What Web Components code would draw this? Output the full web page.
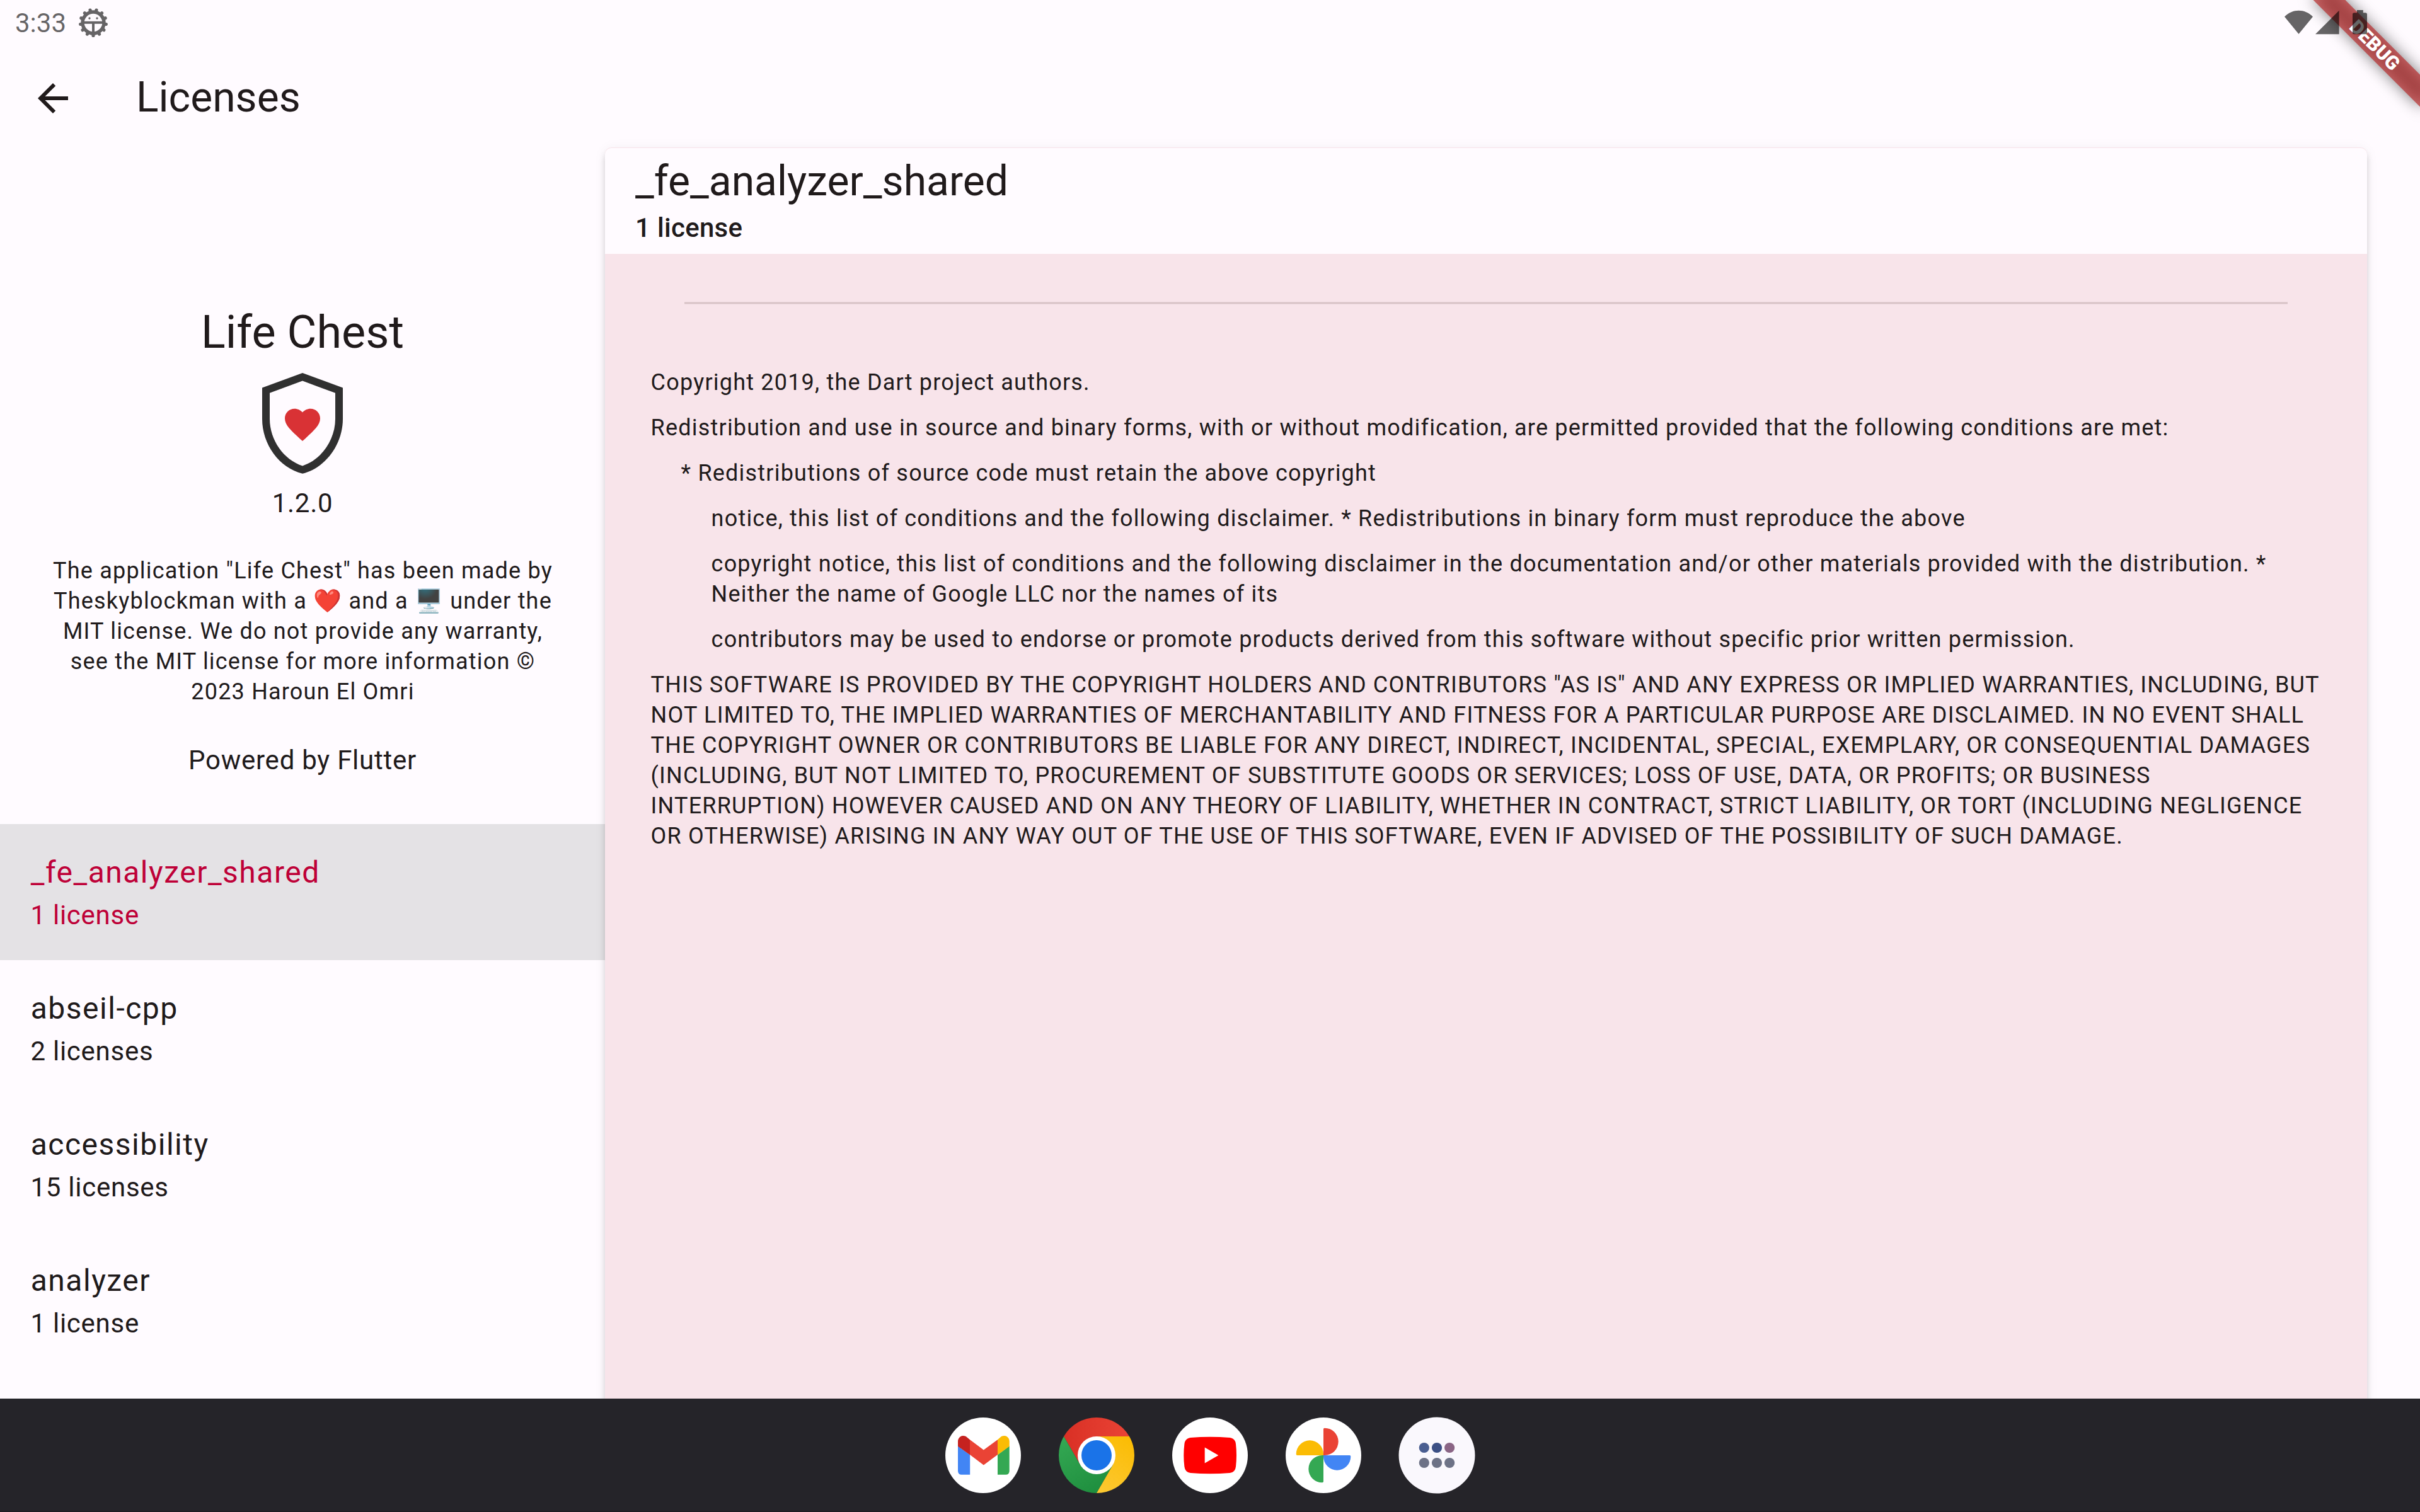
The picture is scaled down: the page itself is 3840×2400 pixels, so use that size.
<!DOCTYPE html>
<html lang="en">
<head>
<meta charset="utf-8">
<title>Licenses</title>
<style>
  html, body { margin: 0; height: 100%; }
  body { font-family: Roboto, "Noto Sans", sans-serif; color: #201a1b; background: #fffbff; overflow: hidden; }
</style>
</head>
<body>
<license-app></license-app>
<script>
const define = (name, html) => customElements.define(name, class extends HTMLElement {
  constructor() {
    super();
    const t = document.createElement('template');
    t.innerHTML = html;
    this.attachShadow({ mode: 'open' }).appendChild(t.content.cloneNode(true));
  }
});

const teeth = Array.from({ length: 13 }, (_, i) => {
  const a = (180 + i * 360 / 13) * Math.PI / 180;
  const p = r => (24 + r * Math.sin(a)).toFixed(2) + ' ' + (24 - r * Math.cos(a)).toFixed(2);
  return 'M' + p(17.5) + 'L' + p(20.5);
}).join('');

define('status-bar', `
<style>
  :host { display: flex; justify-content: space-between; height: 72px; position: relative; z-index: 5; color: rgba(0,0,0,.6); }
  .left { display: flex; padding-left: 24px; }
  .clock { font-size: 42px; line-height: 59px; padding-top: 7px; width: 100px; white-space: nowrap; }
  .left svg { margin-top: 12px; }
  .right { display: flex; }
  svg { display: block; }
</style>
<div class="left">
  <span class="clock">3:33</span>
  <svg width="48" height="48" viewBox="0 0 48 48" fill="none" stroke="#666466">
    <path d="${teeth}" stroke-width="5.2" stroke-linecap="round"/>
    <circle cx="24" cy="24" r="17" stroke-width="5.4"/>
    <path d="M8 23.8H40" stroke-width="4"/><path d="M24 24V39" stroke-width="4"/>
    <circle cx="18" cy="17" r="1.7" fill="#666466" stroke="none"/><circle cx="30" cy="17" r="1.7" fill="#666466" stroke="none"/>
  </svg>
</div>
<div class="right">
  <svg width="240" height="72" viewBox="3600 0 240 72" fill="#000" fill-opacity=".6">
    <path d="M3647.5 54L3625 26.4C3638 13.5 3657 13.5 3670 26.4Z"/>
    <path d="M3674 54.3H3711.6V16.8Z"/>
    <path d="M3740 16H3749.8V20.3H3753.5Q3756 20.3 3756 22.8V51.8Q3756 54.3 3753.5 54.3H3735.5Q3733 54.3 3733 51.8V22.8Q3733 20.3 3735.5 20.3H3740Z"/>
  </svg>
</div>`);

define('debug-banner', `
<style>
  :host { display: block; position: absolute; top: 0; right: 0; width: 260px; height: 260px; overflow: hidden; z-index: 4; }
  .strip { position: absolute; left: 67.9px; top: 54.1px; width: 240px; height: 36px; transform: rotate(45deg); }
  .shade, .band { position: absolute; inset: 0; }
  .shade { background: rgba(0,0,0,.5); filter: blur(12px); }
  .band { background: rgba(183,28,28,.627); color: #fff; font-weight: 900; font-size: 30.6px; line-height: 36px; text-align: center; }
</style>
<div class="strip"><div class="shade"></div><div class="band"><slot></slot></div></div>`);

define('app-header', `
<style>
  :host { display: flex; height: 163px; padding-left: 48px; }
  svg { display: block; margin-top: 48px; width: 72px; height: 72px; }
  .title { padding: 41px 0 0 96px; font-size: 66px; line-height: 83px; white-space: nowrap; }
</style>
<svg viewBox="0 0 24 24" fill="#201a1b"><path d="M20 11H7.83l5.59-5.59L12 4l-8 8 8 8 1.41-1.41L7.83 13H20z"/></svg>
<div class="title"><slot></slot></div>`);

define('app-about', `
<style>
  :host { display: flex; flex-direction: column; align-items: center; height: 828px; padding-top: 245px; text-align: center; white-space: nowrap; }
  .name { font-size: 72px; line-height: 95px; }
  svg { display: block; margin-top: 17px; }
  .body { font-size: 42px; line-height: 59px; letter-spacing: .75px; }
  .version { margin-top: 17px; }
  .legal { margin-top: 54px; font-size: 36px; line-height: 48px; letter-spacing: 1.2px; height: 240px; padding-left: 1px; }
  .legal div { height: 48px; }
  .powered { margin-top: 55px; }
</style>
<div class="name">Life Chest</div>
<svg width="128" height="160" viewBox="416 592 128 160">
  <path fill="#303030" fill-rule="evenodd" d="M480 592L416 615.5V665C416 705 443 742.7 480 751.8C517 742.7 544 705 544 665V615.5ZM480 604.6L532 623.8V665C532 698 510 730 480 739.4C450 730 428 698 428 665V623.8Z"/>
  <path fill="#d93235" transform="translate(446.4 640.3) scale(2.8)" d="M12 21.35l-1.45-1.32C5.4 15.36 2 12.28 2 8.5 2 5.42 4.42 3 7.5 3c1.74 0 3.41.81 4.5 2.09C13.09 3.81 14.76 3 16.5 3 19.58 3 22 5.42 22 8.5c0 3.78-3.4 6.86-8.55 11.54L12 21.35z"/>
</svg>
<div class="body version">1.2.0</div>
<div class="legal">
  <div>The application "Life Chest" has been made by</div>
  <div>Theskyblockman with a ❤️ and a 🖥️ under the</div>
  <div>MIT license. We do not provide any warranty,</div>
  <div>see the MIT license for more information ©</div>
  <div>2023 Haroun El Omri</div>
</div>
<div class="body powered">Powered by Flutter</div>`);

define('package-row', `
<style>
  :host { display: block; box-sizing: border-box; height: 216px; padding: 41px 48px 0; white-space: nowrap; }
  :host([selected]) { background: #e4e2e5; color: #be0037; }
  .name { font-size: 48px; line-height: 71px; letter-spacing: 1.5px; padding-left: .75px; }
  .count { font-size: 42px; line-height: 59px; letter-spacing: .75px; margin-top: 3px; padding-left: .4px; }
</style>
<div class="name"><slot></slot></div>
<div class="count"><slot name="count"></slot></div>`);

define('license-panel', `
<style>
  :host { display: flex; flex-direction: column; box-sizing: border-box; border-radius: 10px 10px 0 0; background: #f8e4ea; padding-top: 1px; margin-top: -1px;
    box-shadow: 0 8px 10px rgba(0,0,0,.15), 0 2px 20px rgba(0,0,0,.06); white-space: nowrap; }
  header { height: 168px; box-sizing: border-box; padding: 11px 48px 0; background: #fffbff; border-radius: 10px 10px 0 0; }
  .name { font-size: 66px; line-height: 83px; }
  .count { font-size: 42px; line-height: 59px; font-weight: 500; letter-spacing: .3px; margin-top: 3px; }
  hr { border: 0; height: 4px; margin: 76px 126px 100px; background: linear-gradient(#e8d3d9 1px, #d8c2c6 1px 3px, #e8d3d9 3px); flex: none; }
  .text { display: flex; flex-direction: column; gap: 24px; padding: 0 72px 0 72.6px; }
</style>
<header>
  <div class="name"><slot name="name"></slot></div>
  <div class="count"><slot name="count"></slot></div>
</header>
<hr>
<div class="text"><slot></slot></div>`);

define('license-paragraph', `
<style>
  :host { display: block; font-size: 36px; line-height: 48px; letter-spacing: 1.2px; white-space: nowrap; }
  :host([indent="1"]) { padding-left: 48px; }
  :host([indent="2"]) { padding-left: 96px; }
</style><slot></slot>`);

define('task-bar', `
<style>
  :host { display: flex; justify-content: center; gap: 60px; box-sizing: border-box; height: 180px; padding-top: 30px; background: #252429; border-bottom: 2px solid #1e1d22; position: relative; z-index: 3; }
  svg { display: block; width: 120px; height: 120px; overflow: visible; flex: none; }
</style>
<svg viewBox="0 0 120 120">
  <circle cx="60" cy="60" r="60" fill="#fff"/>
  <path fill="#4285f4" d="M20 45.3L39.2 59.3V90.7H26Q20 90.7 20 84.7Z"/>
  <path fill="#34a853" d="M101.7 45.3L83 59.3V90.7H95.7Q101.7 90.7 101.7 84.7Z"/>
  <path fill="#c5221f" d="M20 45.7V38C20 30 28.5 26.3 34.5 31.6L39 35.2V59.3Z"/>
  <path fill="#fbbc04" d="M101.7 45.7V38C101.7 30 93.2 26.3 87.2 31.6L83 35.2V59.3Z"/>
  <path fill="#ea4335" d="M39 35.2L60.8 51.4L83 35.2V59.1L60.8 75.6L39 59.1Z"/>
</svg>
<svg viewBox="0 0 120 120">
  <defs>
    <linearGradient id="r" gradientUnits="userSpaceOnUse" x1="8" y1="30" x2="112" y2="30"><stop stop-color="#d93025"/><stop offset="1" stop-color="#ea4335"/></linearGradient>
    <linearGradient id="g" gradientUnits="userSpaceOnUse" x1="68" y1="116" x2="16" y2="26"><stop stop-color="#1e8e3e"/><stop offset="1" stop-color="#34a853"/></linearGradient>
    <linearGradient id="y" gradientUnits="userSpaceOnUse" x1="52" y1="118" x2="104" y2="28"><stop stop-color="#fcc934"/><stop offset="1" stop-color="#fbbc04"/></linearGradient>
  </defs>
  <path fill="url(#r)" d="M8.04 30A60 60 0 0 1 111.96 30H60L34 75Z"/>
  <path fill="url(#g)" d="M8.04 30L34 75L86 75L60 120A60 60 0 0 1 8.04 30Z"/>
  <path fill="url(#y)" d="M111.96 30A60 60 0 0 1 60 120L86 75L60 30Z"/>
  <circle cx="60" cy="60" r="30" fill="#fff"/><circle cx="60" cy="60" r="24" fill="#1a73e8"/>
</svg>
<svg viewBox="0 0 120 120">
  <circle cx="60" cy="60" r="60" fill="#fff"/>
  <path fill="#f00" d="M29 32Q60 29.4 91.5 32Q100 33 101 42Q103 60 101 78Q100 87 91.5 88Q60 90.6 29 88Q20.5 87 19.4 78Q17.2 60 19.4 42Q20.5 33 29 32Z"/>
  <path fill="#fff" d="M51.7 47.6L73.4 60L51.7 72.4Z"/>
</svg>
<svg viewBox="0 0 120 120">
  <circle cx="60" cy="60" r="60" fill="#fff"/>
  <path fill="#ea4335" d="M60 18.5a1.8 1.8 0 0 1 1.8-1.8h.2a21.65 21.65 0 0 1 0 43.3H60Z"/>
  <path fill="#4285f4" transform="rotate(90 60 60)" d="M60 18.5a1.8 1.8 0 0 1 1.8-1.8h.2a21.65 21.65 0 0 1 0 43.3H60Z"/>
  <path fill="#34a853" transform="rotate(180 60 60)" d="M60 18.5a1.8 1.8 0 0 1 1.8-1.8h.2a21.65 21.65 0 0 1 0 43.3H60Z"/>
  <path fill="#fbbc04" transform="rotate(270 60 60)" d="M60 18.5a1.8 1.8 0 0 1 1.8-1.8h.2a21.65 21.65 0 0 1 0 43.3H60Z"/>
</svg>
<svg viewBox="0 0 120 120">
  <circle cx="60" cy="60" r="60.5" fill="#faf8fd"/>
  <circle cx="39.8" cy="48" r="8.1" fill="#4a5e91"/><circle cx="60" cy="48" r="8.1" fill="#3c5085"/><circle cx="80.1" cy="48" r="8.1" fill="#8a6585"/>
  <g fill="#6d7286"><circle cx="39.8" cy="72" r="8.1"/><circle cx="60" cy="72" r="8.1"/><circle cx="80.1" cy="72" r="8.1"/></g>
</svg>`);

define('license-app', `
<style>
  :host { display: flex; flex-direction: column; width: 3840px; height: 2400px; background: #fffbff; position: relative; overflow: hidden; }
  main { display: flex; flex: 1; min-height: 0; }
  aside { width: 960px; flex: none; height: 1985px; overflow: hidden; }
  license-panel { width: 2796px; flex: none; height: 2100px; position: relative; z-index: 1; }
  status-bar, app-header, task-bar { flex: none; }
</style>
<status-bar></status-bar>
<debug-banner>DEBUG</debug-banner>
<app-header>Licenses</app-header>
<main>
  <aside>
    <app-about></app-about>
    <package-row selected>_fe_analyzer_shared<span slot="count">1 license</span></package-row>
    <package-row>abseil-cpp<span slot="count">2 licenses</span></package-row>
    <package-row>accessibility<span slot="count">15 licenses</span></package-row>
    <package-row>analyzer<span slot="count">1 license</span></package-row>
  </aside>
  <license-panel>
    <span slot="name">_fe_analyzer_shared</span>
    <span slot="count">1 license</span>
    <license-paragraph>Copyright 2019, the Dart project authors.</license-paragraph>
    <license-paragraph>Redistribution and use in source and binary forms, with or without modification, are permitted provided that the following conditions are met:</license-paragraph>
    <license-paragraph indent="1">* Redistributions of source code must retain the above copyright</license-paragraph>
    <license-paragraph indent="2">notice, this list of conditions and the following disclaimer. * Redistributions in binary form must reproduce the above</license-paragraph>
    <license-paragraph indent="2">copyright notice, this list of conditions and the following disclaimer in the documentation and/or other materials provided with the distribution. *<br>Neither the name of Google LLC nor the names of its</license-paragraph>
    <license-paragraph indent="2">contributors may be used to endorse or promote products derived from this software without specific prior written permission.</license-paragraph>
    <license-paragraph>THIS SOFTWARE IS PROVIDED BY THE COPYRIGHT HOLDERS AND CONTRIBUTORS "AS IS" AND ANY EXPRESS OR IMPLIED WARRANTIES, INCLUDING, BUT<br>NOT LIMITED TO, THE IMPLIED WARRANTIES OF MERCHANTABILITY AND FITNESS FOR A PARTICULAR PURPOSE ARE DISCLAIMED. IN NO EVENT SHALL<br>THE COPYRIGHT OWNER OR CONTRIBUTORS BE LIABLE FOR ANY DIRECT, INDIRECT, INCIDENTAL, SPECIAL, EXEMPLARY, OR CONSEQUENTIAL DAMAGES<br>(INCLUDING, BUT NOT LIMITED TO, PROCUREMENT OF SUBSTITUTE GOODS OR SERVICES; LOSS OF USE, DATA, OR PROFITS; OR BUSINESS<br>INTERRUPTION) HOWEVER CAUSED AND ON ANY THEORY OF LIABILITY, WHETHER IN CONTRACT, STRICT LIABILITY, OR TORT (INCLUDING NEGLIGENCE<br>OR OTHERWISE) ARISING IN ANY WAY OUT OF THE USE OF THIS SOFTWARE, EVEN IF ADVISED OF THE POSSIBILITY OF SUCH DAMAGE.</license-paragraph>
  </license-panel>
</main>
<task-bar></task-bar>`);
</script>
</body>
</html>
